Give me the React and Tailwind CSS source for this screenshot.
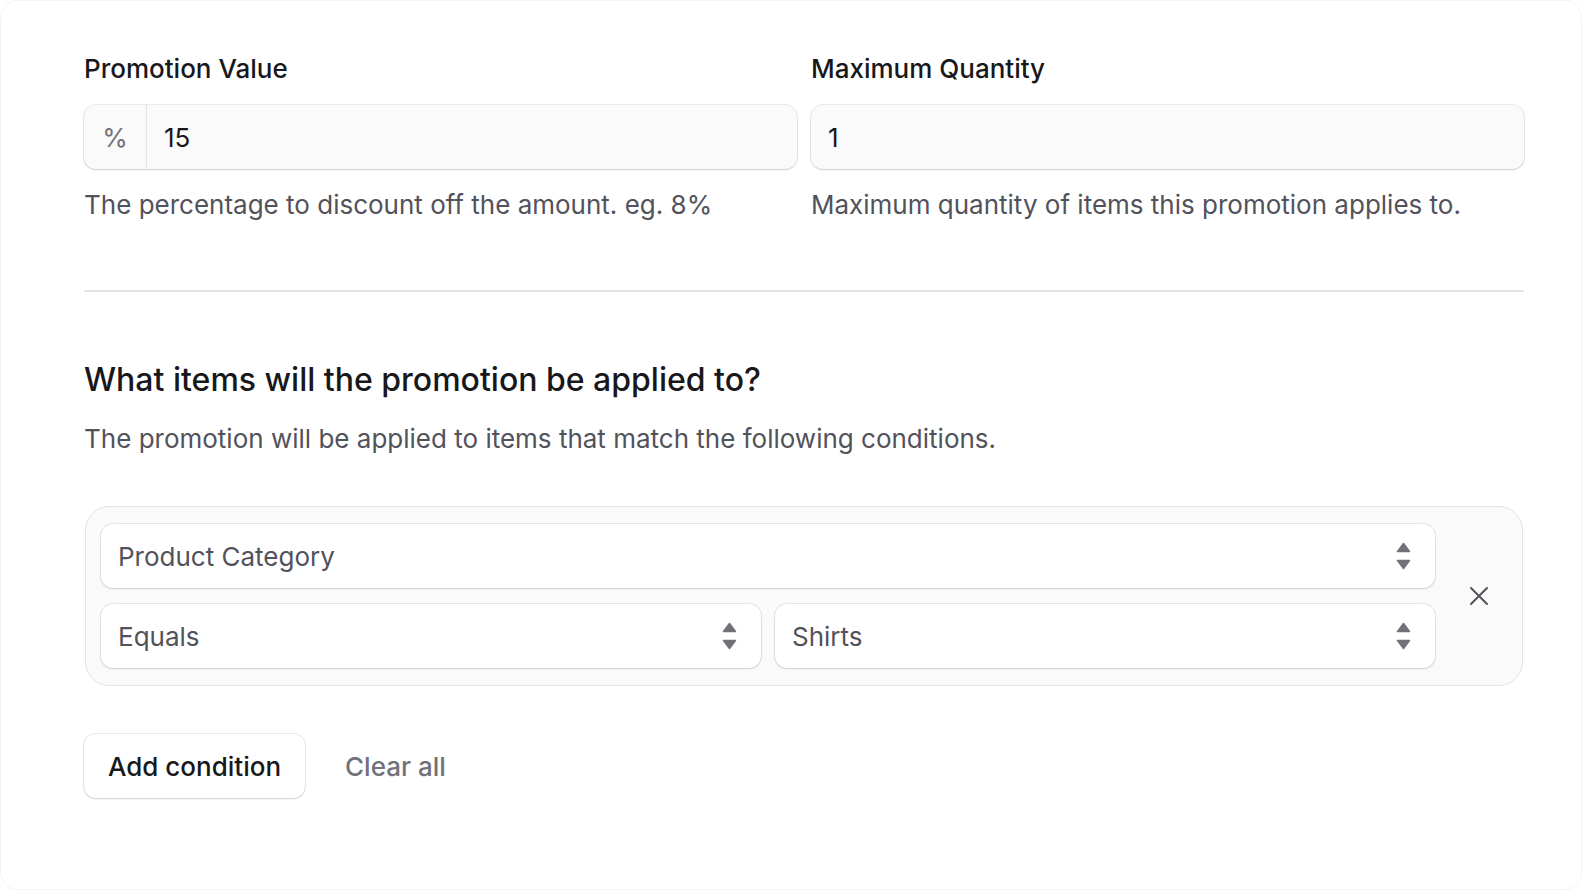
import { useState } from "react";

const inputShadow =
  "shadow-[0_0_0_1px_rgba(0,0,0,0.08),0_1px_2px_0_rgba(0,0,0,0.12)]";

const Triangles = () => (
  <svg width="15" height="28" viewBox="0 0 15 28" className="shrink-0">
    <path d="M7.5 1.5 L13.5 9.5 L1.5 9.5 Z" fill="#71717a" stroke="#71717a" strokeWidth="1.5" strokeLinejoin="round" />
    <path d="M7.5 26.5 L13.5 18.5 L1.5 18.5 Z" fill="#71717a" stroke="#71717a" strokeWidth="1.5" strokeLinejoin="round" />
  </svg>
);

const SelectBox = ({ value }) => (
  <div
    className={`flex h-[64px] items-center justify-between rounded-[12px] bg-white pl-[17px] pr-[24px] ${inputShadow}`}
  >
    <span className="text-[26px] text-[#52525b]">
      {value}
    </span>
    <Triangles />
  </div>
);

export default function App() {

  const [value, setValue] =
    useState("15");

  const [qty, setQty] =
    useState("1");

  return (
    <div className="h-screen w-full overflow-hidden bg-white">
      <div
        className="h-[890px] w-full rounded-[18px] border border-[#f4f4f5] bg-white pl-[83px] pr-[57px] pt-[48px]"
        style={{ fontFamily: "Inter, 'Noto Sans', sans-serif" }}
      >

        <div className="grid grid-cols-2 gap-[14px]">

          <div>
            <div className="text-[26px] font-medium leading-[40px] text-[#18181b]">
              Promotion Value
            </div>

            <div
              className={`mt-[16px] flex h-[64px] overflow-hidden rounded-[12px] bg-[#fafafa] ${inputShadow}`}
            >
              <div className="flex w-[63px] items-center justify-center border-r border-[#e4e4e7] text-[26px] text-[#71717a]">
                %
              </div>
              <input
                value={value}
                onChange={(e) => setValue(e.target.value)}
                className="min-w-0 flex-1 bg-transparent pl-[17px] text-[26px] text-[#18181b] outline-none"
              />
            </div>

            <p className="mt-[16px] text-[26px] leading-[40px] text-[#52525b]">
              The percentage to discount off the amount. eg. 8%
            </p>
          </div>

          <div>
            <div className="text-[26px] font-medium leading-[40px] text-[#18181b]">
              Maximum Quantity
            </div>

            <div
              className={`mt-[16px] flex h-[64px] rounded-[12px] bg-[#fafafa] ${inputShadow}`}
            >
              <input
                value={qty}
                onChange={(e) => setQty(e.target.value)}
                className="min-w-0 flex-1 bg-transparent pl-[17px] text-[26px] text-[#18181b] outline-none"
              />
            </div>

            <p className="mt-[16px] text-[26px] leading-[40px] text-[#52525b]">
              Maximum quantity of items this promotion applies to.
            </p>
          </div>

        </div>

        <div className="mt-[65px] h-[2px] bg-[#e4e4e7]" />

        <h2 className="mt-[66px] text-[32px] font-medium leading-[44px] text-[#18181b]">
          What items will the promotion be applied to?
        </h2>

        <p className="mt-[17px] text-[26px] leading-[40px] text-[#52525b]">
          The promotion will be applied to items that match the following conditions.
        </p>

        <div className="mt-[47px] ml-px mr-px flex rounded-[24px] border border-[#e4e4e7] bg-[#fafafa] py-[17px] pl-[15px]">

          <div className="flex flex-1 flex-col gap-[16px]">
            <SelectBox value="Product Category" />
            <div className="grid grid-cols-2 gap-[14px]">
              <SelectBox value="Equals" />
              <SelectBox value="Shirts" />
            </div>
          </div>

          <div className="flex w-[87px] items-center justify-center">
            <button className="text-[#52525b]">
              <svg width="20" height="20" viewBox="0 0 20 20" fill="none">
                <path d="M2 2 L18 18 M18 2 L2 18" stroke="currentColor" strokeWidth="2" strokeLinecap="round" />
              </svg>
            </button>
          </div>

        </div>

        <div className="mt-[48px] flex items-center gap-[40px]">
          <button
            className={`h-[64px] rounded-[12px] bg-white px-[24px] text-[26px] font-medium text-[#18181b] ${inputShadow}`}
          >
            Add condition
          </button>
          <button className="text-[26px] font-medium text-[#71717a]">
            Clear all
          </button>
        </div>

      </div>
    </div>
  );
}
